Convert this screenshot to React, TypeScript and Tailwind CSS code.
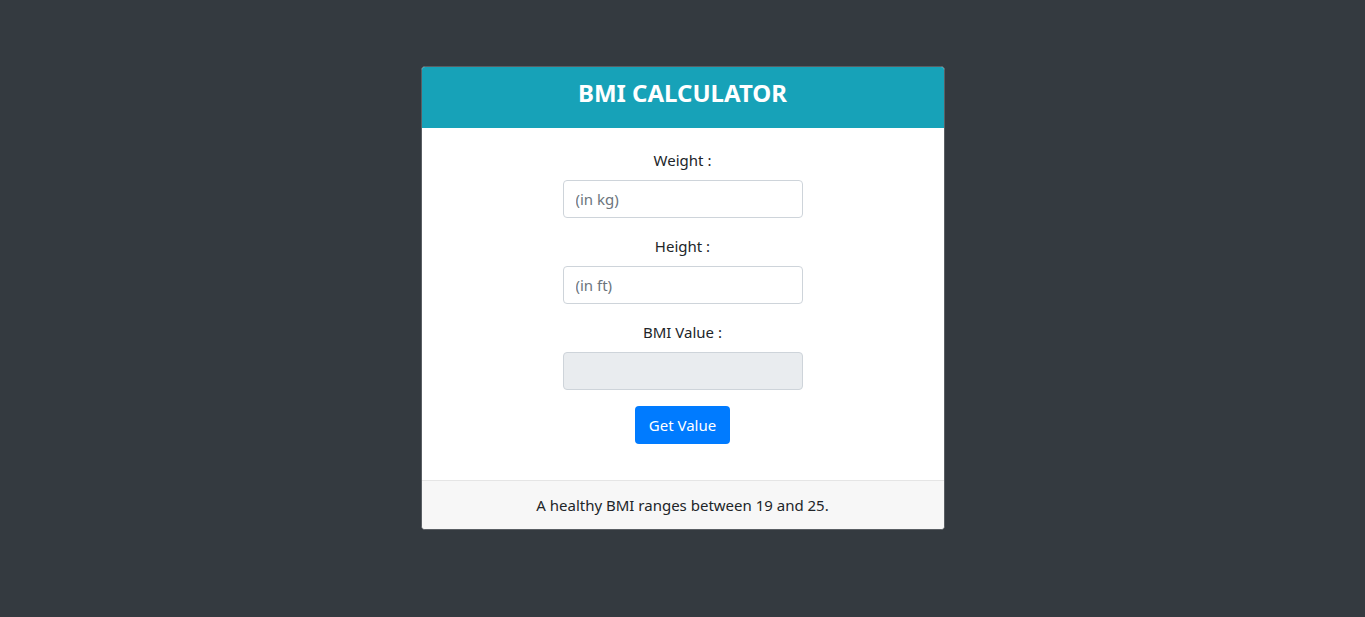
import React from "react";

export default function App() {
  return (
    <div
      className="min-h-[617px] w-full bg-[#343a40] pt-[66px]"
      style={{ fontFamily: '"Noto Sans", "Open Sans", sans-serif' }}
    >
      <div className="mx-auto flex w-[524px] flex-col overflow-hidden rounded-[4px] border border-[#5a5f64] bg-white text-[#212529]">
        <div className="bg-[#17a2b8] px-5 pt-3 pb-3 text-center">
          <h3 className="mb-2 text-[24px] leading-[1.2] font-bold text-white">BMI CALCULATOR</h3>
        </div>
        <div className="flex flex-col items-center px-5 pt-5 pb-5 text-center">
          <div className="mb-4 flex flex-col items-center">
            <label className="mb-2 text-[15px] leading-6">Weight :</label>
            <input
              className="h-[38px] w-[240px] rounded-[4px] border border-[#ced4da] px-3 text-[15px] text-[#495057] outline-none placeholder:text-[#6c757d]"
              placeholder="(in kg)"
            />
          </div>
          <div className="mb-4 flex flex-col items-center">
            <label className="mb-2 text-[15px] leading-6">Height :</label>
            <input
              className="h-[38px] w-[240px] rounded-[4px] border border-[#ced4da] px-3 text-[15px] text-[#495057] outline-none placeholder:text-[#6c757d]"
              placeholder="(in ft)"
            />
          </div>
          <div className="mb-4 flex flex-col items-center">
            <label className="mb-2 text-[15px] leading-6">BMI Value :</label>
            <input
              readOnly
              className="h-[38px] w-[240px] rounded-[4px] border border-[#ced4da] bg-[#e9ecef] px-3 text-[15px] outline-none"
            />
          </div>
          <button className="mb-4 h-[38px] w-[95px] rounded-[4px] bg-[#007bff] text-[15px] text-white">
            Get Value
          </button>
        </div>
        <div className="border-t border-[#e5e5e5] bg-[#f7f7f7] px-5 py-3 text-center text-[15px] leading-6">
          A healthy BMI ranges between 19 and 25.
        </div>
      </div>
    </div>
  );
}
